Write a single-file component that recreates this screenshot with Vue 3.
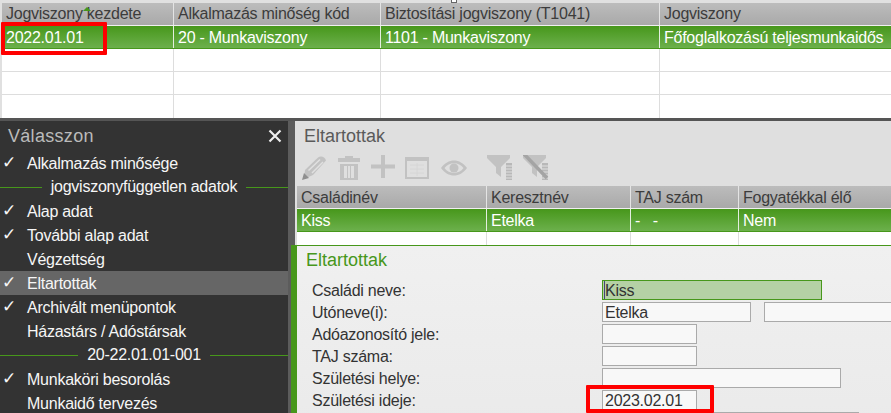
<script setup>
const topCols = ["Jogviszony kezdete", "Alkalmazás minőség kód", "Biztosítási jogviszony (T1041)", "Jogviszony"];
const topRow = ["2022.01.01", "20 - Munkaviszony", "1101 - Munkaviszony", "Főfoglalkozású teljesmunkaidős"];

const menu = [
  { text: "Alkalmazás minősége", check: true },
  { text: "jogviszonyfüggetlen adatok", divider: true },
  { text: "Alap adat", check: true },
  { text: "További alap adat", check: true },
  { text: "Végzettség" },
  { text: "Eltartottak", check: true, active: true },
  { text: "Archivált menüpontok", check: true },
  { text: "Házastárs / Adóstársak" },
  { text: "20-22.01.01-001", divider: true },
  { text: "Munkaköri besorolás", check: true },
  { text: "Munkaidő tervezés" },
];

const subCols = ["Családinév", "Keresztnév", "TAJ szám", "Fogyatékkal élő"];
const subRow = ["Kiss", "Etelka", "-   -", "Nem"];
</script>

<template>
  <div class="page">
    <div class="grid top-grid">
      <div class="row head">
        <div v-for="c in topCols" :key="c" class="cell">{{ c }}</div>
      </div>
      <div class="row selected">
        <div v-for="c in topRow" :key="c" class="cell">{{ c }}</div>
      </div>
      <div v-for="n in 3" :key="n" class="row empty">
        <div v-for="c in 4" :key="c" class="cell"></div>
      </div>
    </div>

    <div class="lower">
      <aside class="sidebar">
        <div class="side-title">
          <span>Válasszon</span>
          <svg class="close" width="14" height="14" viewBox="0 0 14 14">
            <path d="M1.5 1.5l11 11M12.5 1.5l-11 11" stroke="#eee" stroke-width="2.2" fill="none" />
          </svg>
        </div>
        <template v-for="m in menu" :key="m.text">
          <div v-if="m.divider" class="divider">
            <i></i><span>{{ m.text }}</span><i></i>
          </div>
          <div v-else class="item" :class="{ active: m.active }">
            <span class="check">{{ m.check ? "✓" : "" }}</span>
            <span>{{ m.text }}</span>
          </div>
        </template>
      </aside>

      <div class="splitter"></div>

      <main class="content">
        <div class="sub">
          <h2 class="sub-title">Eltartottak</h2>
          <div class="toolbar">
            <svg class="ico" width="25" height="25" viewBox="0 0 25 25">
              <path d="M3 15L16 2.500C19 0.500 23 2 24 5.500L11 20L2 24Z" fill="#c2c2c2" />
              <path d="M6.500 15.500L18 4.500M10 18L21 7" stroke="#e0e0e0" stroke-width="1.500" fill="none" />
              <path d="M0 25L2 18L7 23Z" fill="#8f8f8f" />
            </svg>
            <svg class="ico" width="24" height="25" viewBox="0 0 24 25">
              <path d="M8 3V1H16V3H23V7H1V3Z" fill="#c2c2c2" />
              <path d="M3 9H21V25H3ZM7 11V23H10V11ZM11 11V23H13V11ZM14 11V23H17V11Z" fill="#c2c2c2" fill-rule="evenodd" />
            </svg>
            <svg class="ico" width="24" height="25" viewBox="0 0 24 25">
              <path d="M10 0H14V9.500H24V13.500H14V23H10V13.500H0V9.500H10Z" fill="#c2c2c2" />
            </svg>
            <svg class="ico" width="24" height="25" viewBox="0 0 24 25">
              <rect x="1" y="3" width="22" height="20" fill="none" stroke="#c2c2c2" stroke-width="2" />
              <rect x="1" y="2" width="22" height="4" fill="#c2c2c2" />
              <path d="M5 10H19M5 14H19M5 18H19M12 8V21" stroke="#d6d6d6" />
            </svg>
            <svg class="ico eye" width="26" height="25" viewBox="0 0 26 25">
              <path d="M0 13C7 3 19 3 26 13C19 23 7 23 0 13ZM3.500 13C8 19.500 18 19.500 22.500 13C18 6.500 8 6.500 3.500 13Z" fill="#c2c2c2" fill-rule="evenodd" />
              <circle cx="13" cy="13" r="4.500" fill="#c2c2c2" />
            </svg>
            <svg class="ico funnel" width="26" height="25" viewBox="0 0 26 25">
              <path d="M0 0H23V3L14 12V22L9 18V12L0 3Z" fill="#c2c2c2" />
              <rect x="19" y="8" width="6" height="17" fill="#b8b8b8" />
              <path d="M19 11H25M19 14H25M19 17H25M19 20H25M19 23H25" stroke="#e0e0e0" />
            </svg>
            <svg class="ico" width="26" height="25" viewBox="0 0 26 25">
              <path d="M0 0H23V3L14 12V22L9 18V12L0 3Z" fill="#c2c2c2" />
              <rect x="19" y="8" width="6" height="17" fill="#b8b8b8" />
              <path d="M19 11H25M19 14H25M19 17H25M19 20H25M19 23H25" stroke="#e0e0e0" />
              <path d="M1 -1L24 23" stroke="#a4a4a4" stroke-width="3.500" />
            </svg>
          </div>
          <div class="grid sub-grid">
            <div class="row head">
              <div v-for="c in subCols" :key="c" class="cell">{{ c }}</div>
            </div>
            <div class="row selected">
              <div v-for="c in subRow" :key="c" class="cell pre">{{ c }}</div>
            </div>
            <div class="row filler">
              <div v-for="c in 4" :key="c" class="cell"></div>
            </div>
          </div>
        </div>

        <section class="form">
          <h2 class="form-title">Eltartottak</h2>
          <div class="form-row">
            <label>Családi neve:</label>
            <input class="field focus w-220" readonly value="Kiss" />
          </div>
          <div class="form-row">
            <label>Utóneve(i):</label>
            <input class="field w-149" readonly value="Etelka" />
            <input class="field w-140" readonly value="" />
          </div>
          <div class="form-row">
            <label>Adóazonosító jele:</label>
            <input class="field w-95" readonly value="" />
          </div>
          <div class="form-row">
            <label>TAJ száma:</label>
            <input class="field w-95" readonly value="" />
          </div>
          <div class="form-row">
            <label>Születési helye:</label>
            <input class="field w-239" readonly value="" />
          </div>
          <div class="form-row">
            <label>Születési ideje:</label>
            <input class="field w-95" readonly value="2023.02.01" />
          </div>
          <div class="form-row">
            <label></label>
            <input class="field w-257" readonly value="" />
          </div>
        </section>
      </main>
    </div>

    <div class="sort-arrow"></div>
    <div class="handle"></div>
    <div class="mark mark-top"></div>
    <div class="mark mark-bottom"></div>
  </div>
</template>

<style scoped>
.page {
  position: relative;
  width: 891px;
  height: 413px;
  overflow: hidden;
  background: #e0e0e0;
  font-family: "Liberation Sans", Arial, sans-serif;
  font-size: 16px;
  letter-spacing: -0.25px;
  color: #444;
  display: flex;
  flex-direction: column;
}

.grid {
  background: #fff;
}
.row {
  display: grid;
  flex: none;
}
.cell {
  padding-left: 4px;
  white-space: nowrap;
  overflow: hidden;
  border-right: 1px solid #ddd;
  box-sizing: border-box;
}
.cell:last-child {
  border-right: 0;
}
.pre {
  white-space: pre;
}

.top-grid {
  margin: 3px 0 0 2px;
  height: 115px;
  flex: none;
}
.top-grid .row {
  grid-template-columns: 172px 207px 279px 231px;
}
.sub-grid .row {
  grid-template-columns: 190px 144px 108px 152px;
}

.head {
  height: 23px;
  line-height: 22px;
  background: linear-gradient(#bcbcbc, #a9a9a9);
  border-bottom: 1px solid #f0f0f0;
  box-sizing: border-box;
}
.head .cell {
  border-right-color: #e4e4e4;
  color: #3c3c3c;
}
.sub-grid .head {
  line-height: 24px;
}
.selected {
  height: 23px;
  line-height: 23px;
  background: linear-gradient(#47971b, #6cb04c);
  border-bottom: 1px solid #47971b;
  box-sizing: border-box;
  color: #fff;
}
.selected .cell {
  border-right-color: #e4eee0;
  color: #fff;
}
.empty {
  height: 23px;
  border-bottom: 1px solid #ddd;
  box-sizing: border-box;
}
.empty:last-child {
  border-bottom: 0;
}
.empty .cell,
.filler .cell {
  height: 100%;
}
.filler {
  height: 13px;
}

.lower {
  flex: 1;
  display: flex;
  min-height: 0;
  border-top: 3px solid #555;
}

.sidebar {
  width: 288px;
  flex: none;
  background: #333;
  color: #f6f6f6;
}
.side-title {
  height: 30px;
  display: flex;
  justify-content: space-between;
  align-items: center;
  padding: 0 6px 0 8px;
  font-size: 18px;
  letter-spacing: 0.3px;
  color: #bbb;
}
.item,
.divider {
  height: 24px;
  line-height: 24px;
}
.item {
  display: flex;
  line-height: 26px;
}
.item.active {
  background: #666;
}
.check {
  width: 27px;
  padding-left: 2px;
  box-sizing: border-box;
  font-family: "DejaVu Sans", sans-serif;
  font-size: 17px;
  line-height: 23px;
}
.divider {
  display: flex;
  align-items: center;
  gap: 9px;
}
.divider i {
  flex: 1;
  height: 1px;
  background: #47971b;
}

.splitter {
  width: 7px;
  flex: none;
  background: #5c5c5c;
}

.content {
  flex: 1;
  min-width: 0;
  display: flex;
  flex-direction: column;
}
.sub {
  height: 124px;
  flex: none;
  background: #dfdfdf;
  padding-left: 2px;
  box-sizing: border-box;
}
.sub-title {
  margin: 0;
  padding-left: 7px;
  height: 34px;
  line-height: 30px;
  font-size: 18px;
  font-weight: 400;
  letter-spacing: 0;
  color: #5a5a5a;
}
.toolbar {
  height: 31px;
  display: flex;
  gap: 10px;
  padding-left: 5px;
  align-items: flex-start;
  filter: blur(0.4px);
}
.eye {
  margin-left: 2px;
}
.funnel {
  margin-left: 10px;
}
.sub-grid {
  height: 59px;
}

.form {
  flex: 1;
  margin-left: -4px;
  border-top: 1px solid #47971b;
  border-left: 6px solid #47971b;
  background: linear-gradient(#f0f0f0, #eaeaea);
}
.form-title {
  margin: 0;
  height: 34px;
  padding-left: 9px;
  line-height: 28px;
  font-size: 18px;
  font-weight: 400;
  letter-spacing: 0;
  color: #47971b;
}
.form-row {
  height: 22px;
  display: flex;
  align-items: flex-start;
}
.form-row label {
  width: 305px;
  flex: none;
  padding-left: 15px;
  box-sizing: border-box;
  line-height: 21px;
  color: #333;
}
.field {
  height: 20px;
  padding: 2px 0 0 2px;
  box-sizing: border-box;
  border: 1px solid #aaa;
  border-radius: 0;
  outline: 0;
  background: #f8f8f8;
  font: inherit;
  letter-spacing: inherit;
  color: #333;
  flex: none;
}
.field + .field {
  margin-left: 13px;
}
.focus {
  background: #b5d1a5;
  border-color: #47971b;
  box-shadow: inset 1px 0 0 #b5d1a5, inset 2px 0 0 #45457a;
}
.w-95 { width: 95px; }
.w-140 { width: 140px; }
.w-149 { width: 149px; }
.w-220 { width: 220px; }
.w-239 { width: 239px; }
.w-257 { width: 257px; }

/* overlays */
.sort-arrow {
  position: absolute;
  left: 83px;
  top: 7px;
  border-left: 4px solid transparent;
  border-right: 4px solid transparent;
  border-bottom: 4px solid #47971b;
}
.handle {
  position: absolute;
  left: 451px;
  top: 0;
  width: 4px;
  height: 2px;
  background: #fff;
  border: 1px solid #666;
  border-top: 0;
}
.mark {
  position: absolute;
  border: 4px solid #f00;
  box-sizing: border-box;
  border-radius: 1px;
}
.mark-top {
  left: 1px;
  top: 22px;
  width: 106px;
  height: 33px;
}
.mark-bottom {
  left: 586px;
  top: 385px;
  width: 128px;
  height: 28px;
}
</style>

<style>
html,
body {
  margin: 0;
  background: #e0e0e0;
}
</style>
